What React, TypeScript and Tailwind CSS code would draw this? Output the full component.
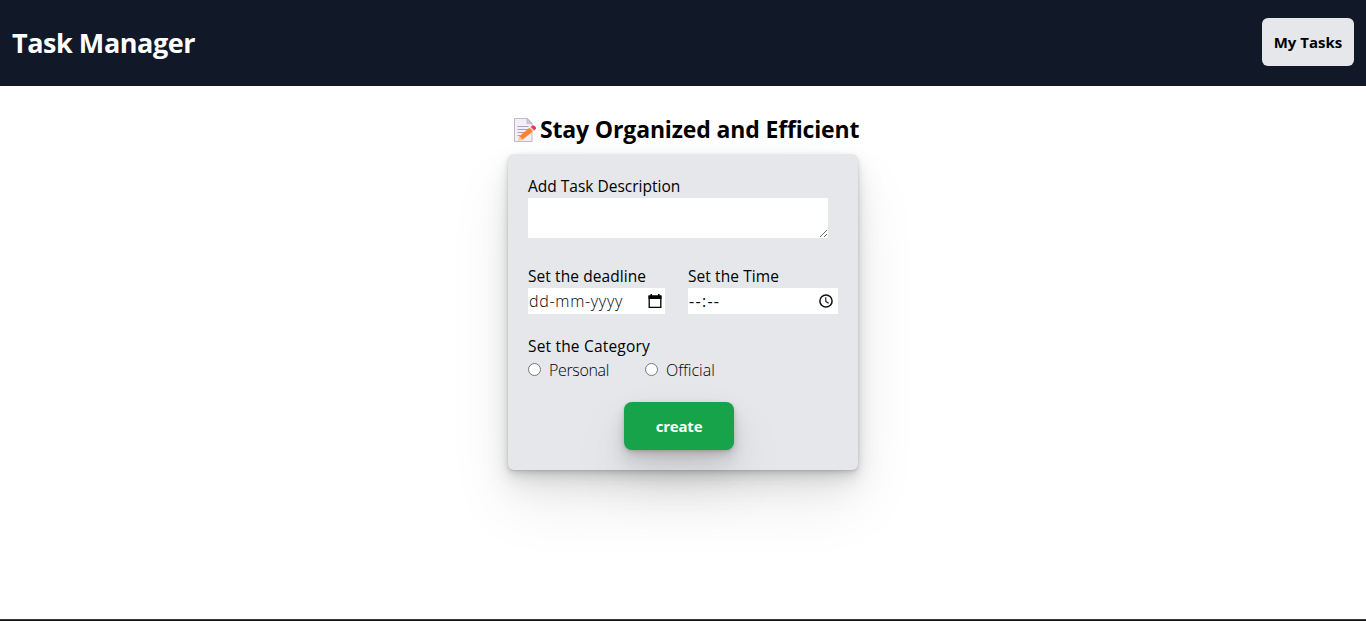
import type { ReactNode } from "react";

const softShadow =
  "shadow-[0_1px_2px_rgba(0,0,0,0.08),0_2px_4px_rgba(0,0,0,0.08),0_4px_8px_rgba(0,0,0,0.08),0_8px_16px_rgba(0,0,0,0.08),0_16px_32px_rgba(0,0,0,0.08),0_32px_64px_rgba(0,0,0,0.08)]";

function MemoIcon() {
  return (
    <svg width="26" height="26" viewBox="0 0 26 26" className="mt-0.5 shrink-0" aria-hidden="true">
      <path d="M2.500 1.500h12.800l4.700 4.700v18.300H2.500z" fill="#f3eef8" stroke="#bfb9cb" strokeWidth="1" />
      <path d="M15 1.500v5h5z" fill="#cdc4d6" stroke="#b7b1c4" strokeWidth="0.700" />
      <path d="M5.500 9.500h11M5.500 12.500h11M5.500 15.500h8M5.500 18.500h3" stroke="#aaa3bf" strokeWidth="1" />
      <path d="M7.300 19.200 17.600 10.700 20.800 14.500 10.400 22.700z" fill="#ff822d" />
      <path d="M7.300 19.200 6.200 23.800 10.400 22.700z" fill="#fcc57a" />
      <path d="m17.600 10.700 1.500-1.200 3.200 3.800-1.500 1.200z" fill="#d3d3d3" />
      <path d="m18.900 9.700 1.600-1.100c1.700-1 4.500 1.900 3.200 3.500l-1.500 1.300z" fill="#f8315f" />
    </svg>
  );
}

function CalendarIcon() {
  return (
    <svg width="14" height="15" viewBox="0 0 14 15" aria-hidden="true">
      <path d="M3.200 0v3M10.800 0v3" stroke="#000" strokeWidth="1.500" />
      <path d="M1.200 2.200h11.600v11.100H1.200z" fill="none" stroke="#000" strokeWidth="1.300" />
      <path d="M.5 1.500h13v3.500H.5z" fill="#000" />
    </svg>
  );
}

function ClockIcon() {
  return (
    <svg width="14" height="14" viewBox="0 0 14 14" fill="none" stroke="#111" aria-hidden="true">
      <circle cx="7" cy="7" r="6.100" strokeWidth="1.500" />
      <path d="M6.800 3.300v4.200l2.900 1.800" strokeWidth="1.100" />
    </svg>
  );
}

function Radio({ children }: { children: ReactNode }) {
  return (
    <label className="flex h-6 items-center font-light">
      <input
        type="radio"
        name="category"
        className="mr-2 mb-px size-[13px] appearance-none rounded-full border border-[#767676] bg-white"
      />
      <span>{children}</span>
    </label>
  );
}

export default function App() {
  return (
    <div className="flex h-[621px] flex-col overflow-hidden bg-white font-['Open_Sans','Noto_Sans',sans-serif] text-base text-black">
      <header className="flex h-[86px] shrink-0 items-center justify-between bg-[#111827] px-3 pb-0.5">
        <h1 className="pt-0.5 text-[27px] font-bold tracking-[-0.45px] text-white">Task Manager</h1>
        <button className="flex h-12 w-[92px] items-center justify-center rounded-md bg-[#e5e7eb] pt-px text-[15px] font-bold">
          <span>My Tasks</span>
        </button>
      </header>

      <main className="flex grow flex-col items-center pt-7">
        <h2 className="flex h-8 w-[350px] items-center pb-0.5 pl-1 text-[23px] font-bold whitespace-nowrap">
          <MemoIcon />
          <span className="ml-[2px] tracking-[-0.15px]">Stay Organized and Efficient</span>
        </h2>

        <form className={`mt-2 flex h-[316px] w-[350px] flex-col rounded-md bg-[#e5e7eb] px-5 pt-5 ${softShadow}`}>
          <label className="flex flex-col text-[15.5px]/6 font-medium">
            Add Task Description
            <textarea className="block h-10 w-[300px] resize bg-white outline-none" />
          </label>

          <div className="mt-[26px] flex gap-[23px]">
            <div className="w-[137px]">
              <p className="text-[15.5px]/6 font-medium tracking-[0.08px]">Set the deadline</p>
              <div className="flex h-[26px] items-center justify-between bg-white pr-[3px] pl-px">
                <span className="font-light tracking-[0.7px]">dd-mm-yyyy</span>
                <CalendarIcon />
              </div>
            </div>
            <div className="w-[150px]">
              <p className="text-[15.5px]/6 font-medium tracking-[0.08px]">Set the Time</p>
              <div className="flex h-[26px] items-center justify-between bg-white pr-[5px] pl-px">
                <span className="tracking-[1.3px]">--:--</span>
                <ClockIcon />
              </div>
            </div>
          </div>

          <div className="mt-5">
            <p className="text-[15.5px]/6 font-medium tracking-[0.18px]">Set the Category</p>
            <div className="flex">
              <div className="w-[117px] tracking-[-0.35px]">
                <Radio>Personal</Radio>
              </div>
              <Radio>Official</Radio>
            </div>
          </div>

          <button
            type="button"
            className={`mt-5 ml-24 h-12 w-[110px] rounded-lg bg-[#16a34a] text-[15px] font-bold tracking-[-0.2px] text-white ${softShadow}`}
          >
            create
          </button>
        </form>
      </main>

      <div className="h-0.5 shrink-0 border-t border-[#38373b] bg-[#151317]" />
    </div>
  );
}
